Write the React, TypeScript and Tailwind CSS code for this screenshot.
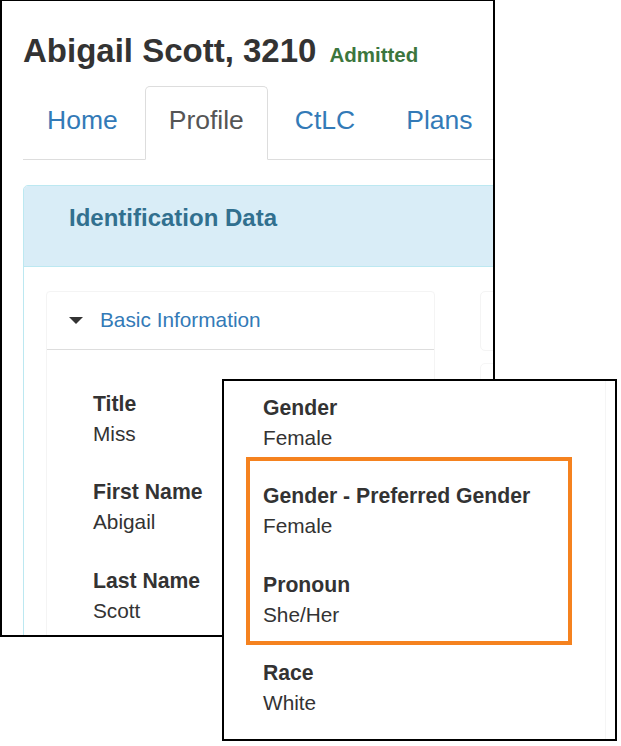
const tabs = ['Home', 'Profile', 'CtLC', 'Plans'];

function Field({ label, value }: { label: string; value: string }) {
  return (
    <div className="text-[20.8px] leading-[30px] text-[#333]">
      <div className="text-[21.2px] font-bold whitespace-nowrap">{label}</div>
      <div className="whitespace-nowrap">{value}</div>
    </div>
  );
}

function Caret() {
  return (
    <svg width="14" height="7" viewBox="0 0 14 7" className="mr-[17px] shrink-0">
      <polygon points="0,0 14,0 7,7" fill="#333" />
    </svg>
  );
}

export default function App() {
  return (
    <div className="relative h-[746px] w-[621px] overflow-hidden bg-white font-['Liberation_Sans',Arial,sans-serif]">
      {/* main window */}
      <div className="h-[637px] w-[495px] overflow-hidden border-2 border-t border-black bg-white">
        <div className="pl-[21px] pt-[32px]">
          <div className="flex items-baseline whitespace-nowrap leading-[36px]">
            <h1 className="text-[33px] font-bold text-[#333]">Abigail Scott, 3210</h1>
            <span className="ml-[13px] text-[20.5px] leading-none font-bold text-[#3c763d]">Admitted</span>
          </div>

          <div className="mt-[17px] flex gap-[3px] border-b border-[#ddd] text-[26.5px] leading-[38px]">
            {tabs.map((tab) => (
              <div
                key={tab}
                className={`-mb-px shrink-0 rounded-t-[5px] border px-[23px] pt-[14px] pb-[20px] ${
                  tab === 'Profile' ? 'border-[#ddd] border-b-white bg-white text-[#555]' : 'border-transparent text-[#337ab7]'
                }`}
              >
                {tab}
              </div>
            ))}
          </div>

          <div className="mt-[25px] w-[560px] shrink-0 rounded-t-[5px] border border-[#bce8f1]">
            <div className="rounded-t-[4px] border-b border-[#bce8f1] bg-[#d9edf7] pl-[45px] pt-[18.5px] pb-[35px] text-[24px] leading-[26.4px] font-bold text-[#31708f]">
              Identification Data
            </div>
            <div className="flex gap-[45px] px-[22px] pt-[24px]">
              <div className="w-[389px] shrink-0 rounded-[4px] border border-[#f4f4f4]">
                <div className="flex items-center border-b border-[#ddd] pl-[22px] pt-[13.5px] pb-[14.5px] text-[20.8px] leading-[29.3px] text-[#337ab7]">
                  <Caret />
                  <span>Basic Information</span>
                </div>
                <div className="flex flex-col gap-[28.5px] pl-[46px] pt-[38.5px] pb-[60px]">
                  <Field label="Title" value="Miss" />
                  <Field label="First Name" value="Abigail" />
                  <Field label="Last Name" value="Scott" />
                </div>
              </div>
              <div className="flex w-[200px] shrink-0 flex-col gap-[12px]">
                <div className="h-[60px] rounded-[5px] border border-[#f4f4f4]" />
                <div className="h-[300px] rounded-[5px] border border-[#f6f6f6]" />
              </div>
            </div>
          </div>
        </div>
      </div>

      {/* zoomed detail window */}
      <div className="absolute left-[222px] top-[379px] flex h-[362px] w-[395px] overflow-hidden border-2 border-black bg-white">
        <div className="h-full w-[382px] shrink-0 border-r border-[#f5f5f5] pl-[39px] pt-[12px]">
          <Field label="Gender" value="Female" />
          <div className="mt-[4px] ml-[-17px] flex w-[326px] flex-col gap-[28.5px] border-4 border-[#f5821f] pl-[13px] pt-[20.3px] pb-[11.5px]">
            <Field label="Gender - Preferred Gender" value="Female" />
            <Field label="Pronoun" value="She/Her" />
          </div>
          <div className="mt-[13px]">
            <Field label="Race" value="White" />
          </div>
        </div>
      </div>
    </div>
  );
}
